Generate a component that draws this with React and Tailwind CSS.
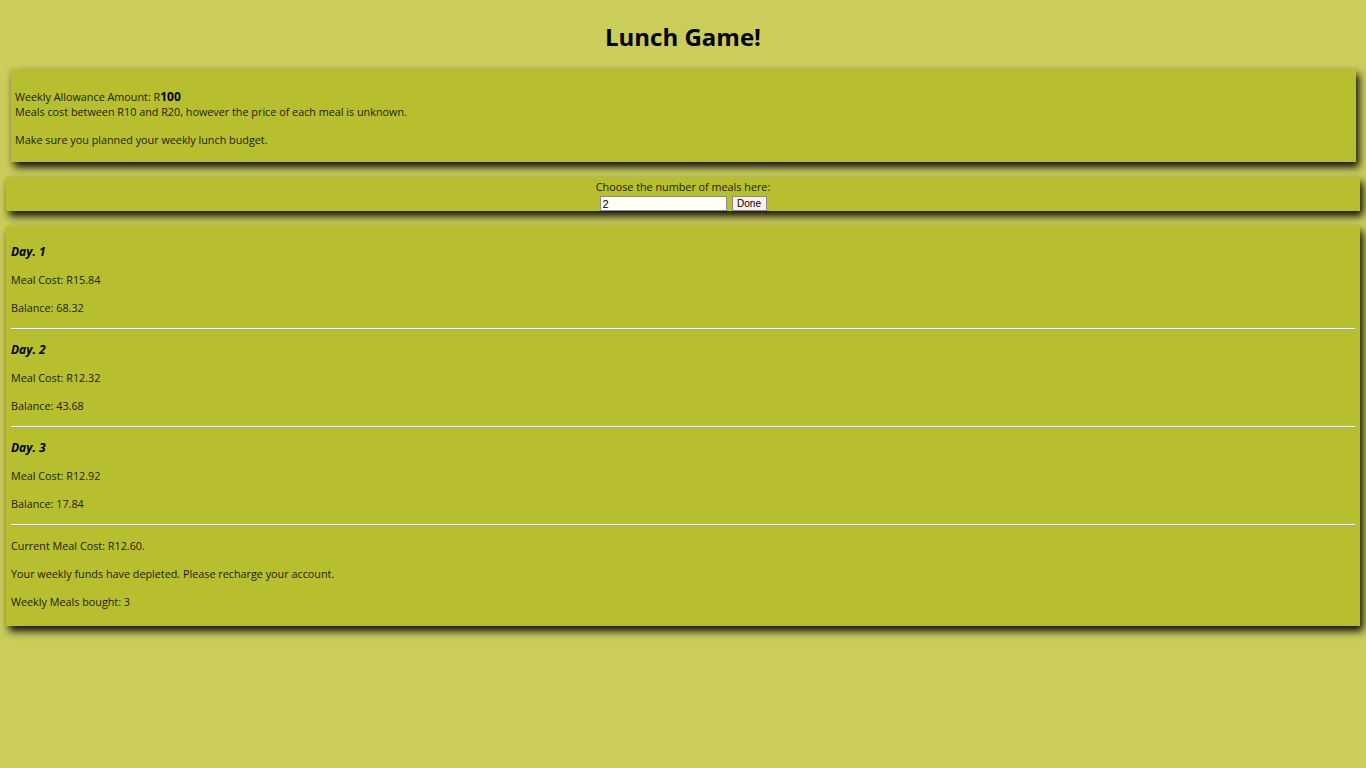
import { useState } from "react";

const days = [
  { day: 1, cost: "15.84", balance: "68.32" },
  { day: 2, cost: "12.32", balance: "43.68" },
  { day: 3, cost: "12.92", balance: "17.84" },
];

const panel =
  "bg-[#b7bf2e] shadow-[3px_5px_8px_rgba(0,0,0,0.95)]";

const App = () => {
  const [meals, setMeals] = useState("2");

  return (
    <div
      className="min-h-[768px] bg-[#cbcd5a] text-[10.8px] leading-[15px] text-[#1c1c10] pb-10"
      style={{ fontFamily: '"Open Sans", "Noto Sans", sans-serif' }}
    >
      <h1 className="pt-[22px] pb-[17px] text-center text-[24px] leading-[30px] font-bold text-black">
        Lunch Game!
      </h1>

      <div className={`${panel} ml-[11px] mr-[10px] px-1 pt-[20px] pb-[15px]`}>
        <div>
          Weekly Allowance Amount: R<span className="font-bold text-[12px] text-black">100</span>
        </div>
        <div>Meals cost between R10 and R20, however the price of each meal is unknown.</div>
        <div className="mt-[13px]">Make sure you planned your weekly lunch budget.</div>
      </div>

      <div className={`${panel} mt-[15px] mx-[6px] flex flex-col items-center pt-[2px] pb-0`}>
        <div>Choose the number of meals here:</div>
        <div className="flex items-center gap-[5px] mt-[2px]">
          <input
            value={meals}
            onChange={(e) => setMeals(e.target.value)}
            className="w-[127px] h-[15px] bg-[#fffff2] border border-[#8a8a8a] px-[2px] text-[11px] leading-[13px] text-black outline-none"
            style={{ fontFamily: '"Liberation Sans", Arial, sans-serif' }}
          />
          <button
            className="w-[35px] h-[15px] bg-[#fdeee8] border border-[#8a8a8a] text-[10px] leading-[12px] text-black"
            style={{ fontFamily: '"Liberation Sans", Arial, sans-serif' }}
          >
            Done
          </button>
        </div>
      </div>

      <div className={`${panel} mt-[15px] mx-[6px] px-[5px] pt-[18px] pb-[17px]`}>
        {days.map((d) => (
          <div key={d.day}>
            <div className="font-bold italic text-[12px] text-black">Day. {d.day}</div>
            <div className="mt-[13px]">Meal Cost: R{d.cost}</div>
            <div className="mt-[13px]">Balance: {d.balance}</div>
            <hr className="mt-[13px] mb-[12px] border-0 border-t border-b border-t-[#f4f4f0] border-b-[#a3a78a]" />
          </div>
        ))}
        <div>Current Meal Cost: R12.60.</div>
        <div className="mt-[13px]">Your weekly funds have depleted. Please recharge your account.</div>
        <div className="mt-[13px]">Weekly Meals bought: 3</div>
      </div>
    </div>
  );
};

export default App;
